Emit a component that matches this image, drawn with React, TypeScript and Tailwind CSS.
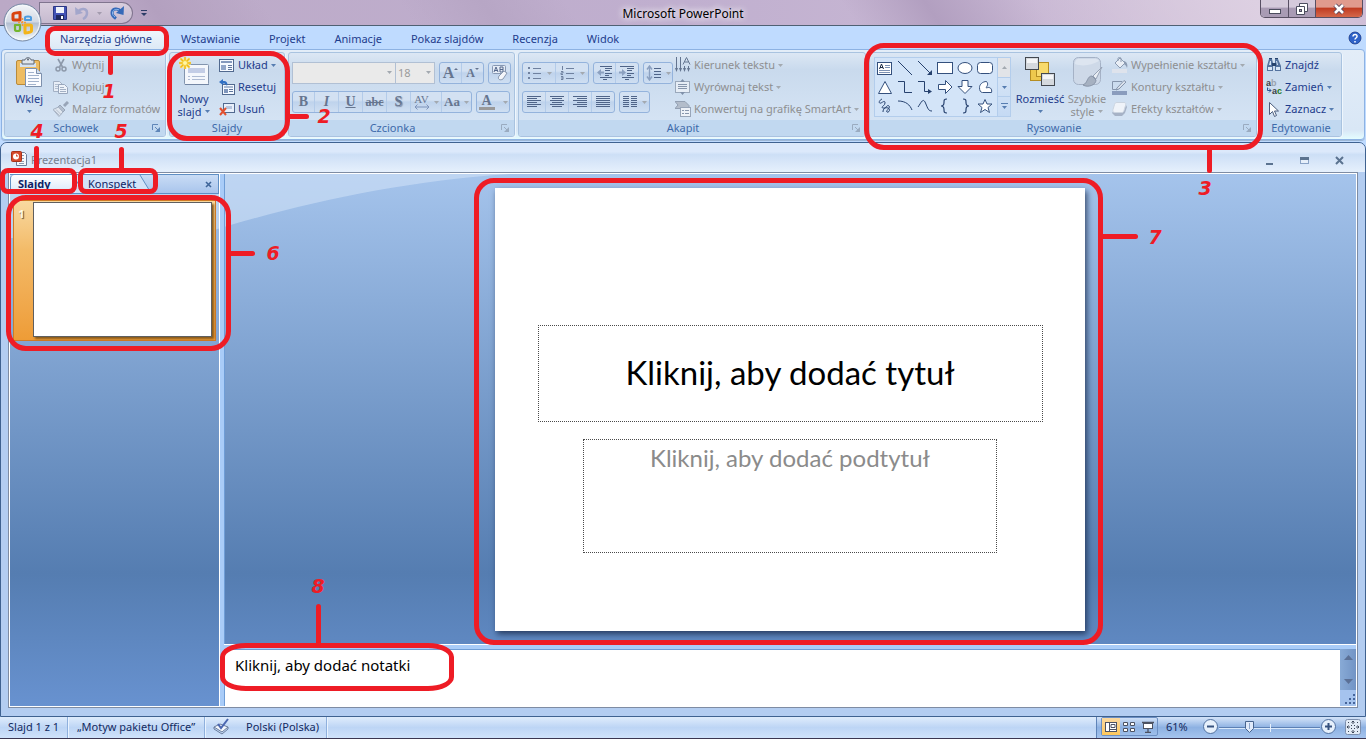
import React from "react";

type IconProps = { children: React.ReactNode; size?: number; className?: string };

function Icon({ children, size = 16, className = "" }: IconProps) {
  return (
    <svg
      width={size}
      height={size}
      viewBox={`0 0 ${size} ${size}`}
      fill="none"
      aria-hidden="true"
      className={"shrink-0 " + className}
    >
      {children}
    </svg>
  );
}

function Arrow({ tone = "text-[#567db1]" }: { tone?: string }) {
  return (
    <svg width="5" height="3" viewBox="0 0 5 3" aria-hidden="true" className={"shrink-0 " + tone}>
      <path d="M0 0h5L2.5 3z" fill="currentColor" />
    </svg>
  );
}

const grey = "text-[#a3a9b0]";

/* ---------- Ribbon building blocks ---------- */

function Group({
  label,
  width,
  launcher = false,
  muted = false,
  children,
}: {
  label: string;
  width: string;
  launcher?: boolean;
  muted?: boolean;
  children: React.ReactNode;
}) {
  return (
    <section
      aria-label={label}
      className={
        "flex h-[85px] shrink-0 flex-col overflow-hidden rounded-[3px] border border-[#a9c3e0] bg-linear-to-b from-[#dce7f4] from-0% via-[#c9daed] via-20% to-[#d8e6f6] shadow-[1px_1px_0_#eef6fd] " +
        width
      }
    >
      <div className="flex flex-1">{children}</div>
      <div
        className={
          "relative flex h-4 items-center justify-center bg-[#c1d8f0] text-[11px] leading-4 text-[#3e6aaa]" +
          (launcher ? " pr-[18px]" : "")
        }
      >
        {label}
        {launcher && (
          <button aria-label={label + " – opcje"} className="absolute right-1 top-1">
            <Icon size={9} className={muted ? "text-[#9aabc0]" : "text-[#5f86b8]"}>
              <path d="M.5 6V.5H6" stroke="currentColor" />
              <path d="M3 3l3 3" stroke="currentColor" />
              <path d="M8 3v5H3z" fill="currentColor" />
            </Icon>
          </button>
        )}
      </div>
    </section>
  );
}

function Row({
  icon,
  text,
  arrow = false,
  disabled = false,
}: {
  icon: React.ReactNode;
  text: string;
  arrow?: boolean;
  disabled?: boolean;
}) {
  return (
    <button
      disabled={disabled}
      className={
        "flex h-[22px] items-center gap-[3px] whitespace-nowrap text-[11px] leading-4" +
        (disabled ? " text-[#8e8f91]" : " text-[#1e3c8c]")
      }
    >
      {icon}
      <span>{text}</span>
      {arrow && <Arrow tone={disabled ? grey : undefined} />}
    </button>
  );
}

function ButtonStrip({ children }: { children: React.ReactNode }) {
  return (
    <div className="flex h-[22px] divide-x divide-[#b3cbe9] rounded-[3px] border border-[#94b3dc] bg-linear-to-b from-[#d3e1f2] from-40% via-[#bfd3ec] via-50% to-[#cfdff2]">
      {children}
    </div>
  );
}

function StripButton({ label, width, children }: { label: string; width: string; children: React.ReactNode }) {
  return (
    <button
      disabled
      aria-label={label}
      className={"flex items-center justify-center gap-1 font-[Liberation_Serif] text-[14px] leading-4 text-[#66758f] " + width}
    >
      {children}
    </button>
  );
}

function Lines({ rows, color = "#4f6488" }: { rows: [number, number][]; color?: string }) {
  return (
    <Icon>
      {rows.map(([x, w], i) => (
        <rect key={i} x={x} y={2 + i * 2} width={w} height="1" fill={color} />
      ))}
    </Icon>
  );
}

/* ---------- Icons ---------- */

const PasteIcon = () => (
  <Icon size={32}>
    <rect x="3.500" y="4.500" width="23" height="24" rx="1.500" fill="#eebc62" stroke="#b98a3a" />
    <rect x="7" y="7" width="16" height="4" fill="#d6e3f2" />
    <path d="M9 4h3c0-3 6-3 6 0h3v4H9z" fill="#dfe5ec" stroke="#5d6777" />
    <circle cx="15" cy="3.500" r="1" fill="#5d6777" />
    <path d="M12.500 12.500h11l5 5v13h-16z" fill="#fbfcff" stroke="#7d90ad" />
    <path d="M23.500 12.500v5h5" fill="#d5e0f0" stroke="#7d90ad" />
    <path d="M15 16.500h6M15 19.500h11M15 22.500h11M15 25.500h11M15 28.500h8" stroke="#a3b3cc" />
  </Icon>
);

const ScissorsIcon = () => (
  <Icon>
    <path d="M5 2l4.500 8M11 2L6.500 10" stroke="#8d99aa" strokeWidth="1.600" />
    <circle cx="5" cy="12" r="2" stroke="#8d99aa" strokeWidth="1.500" />
    <circle cx="11" cy="12" r="2" stroke="#8d99aa" strokeWidth="1.500" />
  </Icon>
);

const CopyIcon = () => (
  <Icon>
    <path d="M.500 2.500h6l3 3v7h-9z" fill="#e8eef7" stroke="#a3b0c4" />
    <path d="M2 5.500h4M2 7.500h4M2 9.500h3" stroke="#b3bfd0" />
    <path d="M5.500 5.500h6l3 3v6h-9z" fill="#eef3fa" stroke="#98a6bc" />
    <path d="M7 8.500h4M7 10.500h6M7 12.500h6" stroke="#a3b0c4" />
  </Icon>
);

const BrushIcon = () => (
  <Icon>
    <path d="M15 1l-4 4" stroke="#98a5b8" strokeWidth="3" />
    <path d="M7 4l5 5-2 2-5-5z" fill="#b3bfcf" stroke="#98a5b8" />
    <path d="M5.500 6L0 8.500l6 7L10 11z" fill="#dfe6ef" stroke="#a3afc0" />
    <path d="M3 8.500l5 5M1.500 9.500l5 5" stroke="#b3bdcc" />
  </Icon>
);

const NewSlideIcon = () => (
  <Icon size={32}>
    <rect x="6.500" y="8.500" width="24" height="20" rx="1" fill="#f4f7fc" stroke="#8294ae" />
    <rect x="10" y="12" width="17" height="5" fill="#c3cde6" />
    <path d="M10 20.500h2M14 20.500h13M10 23.500h2M14 23.500h13" stroke="#aebbd3" />
    <path d="M7 28.500h24" stroke="#7386a4" />
    <path d="M7 1v12M1 7h12M2.500 2.500l9 9M11.500 2.500l-9 9" stroke="#fbe98f" strokeWidth="3" />
    <path d="M7 1v12M1 7h12M2.500 2.500l9 9M11.500 2.500l-9 9" stroke="#f0b916" strokeWidth="1.500" />
    <circle cx="7" cy="7" r="2.500" fill="#fff6a5" stroke="#f4cf3a" />
  </Icon>
);

const LayoutIcon = () => (
  <Icon>
    <rect x=".500" y="2.500" width="14" height="12" fill="#f5f9ff" stroke="#51698f" />
    <rect x="2" y="4" width="11" height="2" fill="#8499bd" />
    <rect x="2" y="8" width="5" height="5" fill="#91a6c9" />
    <path d="M9 8.500h4M9 10.500h4M9 12.500h4" stroke="#5f779e" />
  </Icon>
);

const ResetIcon = () => (
  <Icon>
    <rect x="3.500" y="5.500" width="12" height="10" fill="#f5f9ff" stroke="#51698f" />
    <rect x="5" y="7" width="9" height="2" fill="#a9b9d2" />
    <rect x="5" y="10" width="4" height="4" fill="#7e95bb" />
    <path d="M10 10.500h4M10 12.500h4" stroke="#5f779e" />
    <path d="M0 3l4-3v2c4 0 5 2 4 5C7 5 6 4.500 4 4.500V6z" fill="#2f6fc4" />
  </Icon>
);

const DeleteIcon = () => (
  <Icon>
    <rect x="4.500" y="2.500" width="11" height="9" fill="#e8effa" stroke="#51698f" />
    <rect x="7" y="5" width="6" height="3" fill="#b6c5de" />
    <path d="M1 7l6 7M7 7l-6 7" stroke="#e2502f" strokeWidth="2" />
  </Icon>
);

const TextDirIcon = () => (
  <Icon>
    <path d="M1.500 0v12M5.500 0v12" stroke="#63748f" />
    <path d="M0 11h3l-1.500 4zM4 11h3l-1.500 4zM8 11h3l-1.500 4zM12 11h3l-1.500 4z" fill="#63748f" />
    <path d="M9.500 9v3M13.500 9v3M8 7.500L11.500.500 15 7.500M9.500 5h4" stroke="#63748f" />
  </Icon>
);

const AlignTextIcon = () => (
  <Icon>
    <rect x=".500" y="2.500" width="14" height="11" fill="#e6edf6" stroke="#9aa8bb" />
    <path d="M3 5.500h9M3 7.500h9M3 9.500h9" stroke="#8695ac" />
    <path d="M5 3h5L7.500 0zM5 13h5l-2.500 3z" fill="#7f90aa" />
  </Icon>
);

const SmartArtIcon = () => (
  <Icon>
    <path d="M0 .500h10l4 4v3H0l3-3.500z" fill="#b3bdcb" stroke="#93a0b3" />
    <rect x="5.500" y="6.500" width="10" height="9" fill="#eef2f8" stroke="#98a5b8" />
    <path d="M7 9h2v1H7zM7 12h2v1H7zM10 9h4v1h-4zM10 12h4v1h-4z" fill="#8796ad" />
  </Icon>
);

const BucketIcon = () => (
  <Icon>
    <path d="M3 6l5-5 5 5-5 5z" fill="#e9eef5" stroke="#8c9bb2" />
    <path d="M6 4V1.500C6 0 9 0 9 1.500V5" stroke="#8c9bb2" />
    <path d="M12 4c3 1 4 4 3 7-1-3-2-3-3-4z" fill="#8c9bb2" />
    <rect x="0" y="12" width="15" height="4" fill="#dee3ec" />
  </Icon>
);

const OutlineIcon = () => (
  <Icon>
    <path d="M10 2.500H.500V10.500H6" stroke="#8695ac" />
    <path d="M5 9l7-7.500 2 1.500-7 7-3 1z" fill="#dbe2ec" stroke="#8695ac" />
    <rect x="0" y="12" width="15" height="4" fill="#8a9cbd" />
  </Icon>
);

const EffectsIcon = () => (
  <Icon>
    <path d="M6 4h8l1 2-2 6-3 3H3l-3-3z" fill="#a6b2c6" />
    <path d="M5 1.500h7c2 0 2 1 1.500 3L12 9.500c-.5 2-1.500 2-3 2H3c-2 0-2.500-1-2-3l1.500-5c.5-1.500 1-2 2.500-2z" fill="#eff3f9" stroke="#cbd4e0" />
  </Icon>
);

const ArrangeIcon = () => (
  <Icon size={32}>
    <rect x="6.500" y="13.500" width="12" height="11" fill="#edc84d" stroke="#b58d22" />
    <rect x="12.500" y="6.500" width="12" height="14" fill="#f8da6b" stroke="#b58d22" />
    <rect x="1.500" y="1.500" width="13" height="12" fill="#d5d9de" stroke="#43484f" />
    <path d="M3 3h10v4H3z" fill="#f4f5f7" />
    <rect x="17.500" y="17.500" width="13" height="12" fill="#d5d9de" stroke="#43484f" />
    <path d="M19 19h10v4H19z" fill="#f4f5f7" />
  </Icon>
);

const QuickStylesIcon = () => (
  <Icon size={32}>
    <rect x="2.500" y="1.500" width="27" height="27" rx="5" fill="#ced9e8" stroke="#a5b2c6" />
    <path d="M4 8c8 3 17 1 24-3-1-2-3-2-5-2H8C5 3 4 5 4 8z" fill="#dde5f0" />
    <path d="M31 11l-9 9 3 3z" fill="#e9eef4" stroke="#96a2b5" />
    <path d="M21 20c-5 0-4 7-9 9 5 3 13 0 13-5z" fill="#a6b1c1" stroke="#8894a7" />
  </Icon>
);

const BinocularsIcon = () => (
  <Icon>
    <path d="M3 2h3l1 4v8H1V9zM9 2h3l3 7v5H9z" fill="#54739f" />
    <path d="M6 6h4v3H6zM3 1h3v1H3zM9 1h3v1H9z" fill="#27436d" />
    <path d="M2 10h4v3H2zM10 10h4v3h-4zM4 4h1v4H3zM10 4h1l1 4h-1z" fill="#d9e7f7" />
  </Icon>
);

const ReplaceIcon = () => (
  <svg width="16" height="16" viewBox="0 0 16 16" aria-hidden="true" className="shrink-0 overflow-visible font-[Liberation_Sans] font-bold">
    <text x="0" y="7" fontSize="9" fill="#3b3f48">
      a<tspan fill="#9aa2ad">b</tspan>
    </text>
    <text x="6" y="15" fontSize="9" fill="#3b3f48">
      a<tspan fill="#1d7a1d">c</tspan>
    </text>
    <path d="M1.500 8.500v3H5M3 9.500l2 2-2 2" fill="none" stroke="#2b5596" />
  </svg>
);

const CursorIcon = () => (
  <Icon>
    <path d="M3.500 1.500v12l3-3 2 5 2-1-2-4.500h4z" fill="#fff" stroke="#4b5d7c" />
  </Icon>
);

const shapes: { name: string; d: React.ReactNode }[] = [
  {
    name: "Pole tekstowe",
    d: (
      <>
        <rect x=".500" y="2.500" width="14" height="12" fill="#fff" stroke="#34507d" />
        <path d="M2.500 9l2-5 2 5M3 7.500h3" stroke="#1c2b45" />
        <path d="M8 5.500h5M8 7.500h5M2 10.500h11M2 12.500h11" stroke="#7c91b3" />
      </>
    ),
  },
  { name: "Linia", d: <path d="M1 1l14 14" stroke="#26416e" /> },
  {
    name: "Strzałka",
    d: (
      <>
        <path d="M1 1l12 12" stroke="#26416e" />
        <path d="M15 15v-5l-5 5z" fill="#26416e" />
      </>
    ),
  },
  { name: "Prostokąt", d: <rect x=".500" y="2.500" width="15" height="11" fill="#fff" stroke="#34507d" /> },
  { name: "Elipsa", d: <ellipse cx="8" cy="8" rx="7" ry="5.500" fill="#fff" stroke="#34507d" /> },
  { name: "Prostokąt zaokrąglony", d: <rect x=".500" y="2.500" width="15" height="11" rx="3" fill="#fff" stroke="#34507d" /> },
  { name: "Trójkąt", d: <path d="M8 2.500l6.500 12h-13z" fill="#fff" stroke="#34507d" /> },
  { name: "Łącznik łamany", d: <path d="M1 2.500h6.500v11H15" stroke="#26416e" /> },
  {
    name: "Łącznik łamany ze strzałką",
    d: (
      <>
        <path d="M1 2.500h6.500v10H13" stroke="#26416e" />
        <path d="M11 10v5l4-2.500z" fill="#26416e" />
      </>
    ),
  },
  { name: "Strzałka w prawo", d: <path d="M1.500 5.500h7v-4l6.500 6.500-6.500 6.500v-4h-7z" fill="#fff" stroke="#34507d" /> },
  { name: "Strzałka w dół", d: <path d="M5 1.500h6v6h4l-7 7-7-7h4z" fill="#fff" stroke="#34507d" /> },
  {
    name: "Kształt dowolny",
    d: <path d="M9.500 2.500c-4 0-7 3-7 6s1 5 3 5h9c1-4-2-6-5-4.500-1-1 3-3 0-6.500z" fill="#fff" stroke="#34507d" />,
  },
  { name: "Bazgroły", d: <path d="M5 1C1 3 2 6 4 5s4-3 4 0-5 4-2 5 4-4 6-2-4 5-2 6 4-3 1-4-5 1-5 4" stroke="#26416e" /> },
  { name: "Łuk", d: <path d="M1 3c8 0 12 4 14 9" stroke="#26416e" /> },
  { name: "Krzywa", d: <path d="M1 9C4 5 6-1 8.500 5s3 8 6.500 8" stroke="#26416e" /> },
  { name: "Lewy nawias", d: <path d="M10 1c-3 0-3 1-3 3.500S6 8 4 8c2 0 3 1 3 3.500s0 3.500 3 3.500" stroke="#26416e" strokeWidth="1.200" /> },
  { name: "Prawy nawias", d: <path d="M6 1c3 0 3 1 3 3.500S10 8 12 8c-2 0-3 1-3 3.500S9 15 6 15" stroke="#26416e" strokeWidth="1.200" /> },
  { name: "Gwiazda", d: <path d="M8 1.500l2 4.500h5l-4 3.500 1.500 5L8 11.500l-4.500 3 1.500-5L1 6h5z" fill="#fff" stroke="#34507d" /> },
];

/* ---------- Annotation markers ---------- */

function Callout({ n, box, line, num }: { n: number; box: string; line: string; num: string }) {
  return (
    <>
      <div className={"pointer-events-none absolute z-20 border-[5px] border-[#ee1c25] " + box} />
      <div className={"pointer-events-none absolute z-20 rounded-full bg-[#ee1c25] " + line} />
      <span
        className={
          "pointer-events-none absolute z-20 w-4 text-center font-[DejaVu_Sans] text-[19px] font-bold italic leading-5 text-[#ee1c25] " +
          num
        }
      >
        {n}
      </span>
    </>
  );
}

/* ---------- Window sections ---------- */

function TitleBar() {
  return (
    <header className="relative flex h-[25px] shrink-0 items-start justify-between bg-linear-to-r from-[#bba9c6] via-[#c0afcf] to-[#d3c3da]">
      <div className="pointer-events-none absolute inset-0 bg-[linear-gradient(56deg,transparent_8%,#b3a0bf_12%,transparent_20%,transparent_30%,#b7a6c5_36%,transparent_42%,transparent_62%,#b29fc0_68%,transparent_76%,#ddd0e2_92%,#cdbbd5)]" />
      <div className="relative flex items-center pl-[39px] pt-[2px]">
        <div className="flex h-[22px] w-[94px] items-center gap-2 rounded-r-full rounded-tl-[3px] border border-[#80758f] bg-linear-to-b from-[#d9cede] to-[#c6bacf] pl-[13px]">
          <button aria-label="Zapisz">
            <Icon size={14}>
              <path d="M.500.500h13v13h-13z" fill="#4352b5" stroke="#2c3784" />
              <rect x="3" y="1" width="8" height="6" fill="#eef2fb" />
              <rect x="3" y="9" width="8" height="5" fill="#20285e" />
              <rect x="8" y="10" width="2" height="3" fill="#fff" />
            </Icon>
          </button>
          <button disabled aria-label="Cofnij" className="flex items-center gap-2">
            <Icon size={14}>
              <path d="M3 5.500C6 2 12 2 12 7c0 3-2 5-4 6" stroke="#a3a6cb" strokeWidth="2.500" />
              <path d="M0 1l.5 8L8 7z" fill="#a3a6cb" />
            </Icon>
            <Arrow tone="text-[#a39bae]" />
          </button>
          <button aria-label="Ponów">
            <Icon size={14}>
              <path d="M11 5C8 2 2 2 2 7c0 3 2 4 4 5.500" stroke="#3569b8" strokeWidth="3" />
              <path d="M9 4C6 2.500 2.500 4 2.500 7c0 2 1 3 2.500 4" stroke="#8fbcf0" />
              <path d="M14 0l-.5 9L6 7z" fill="#3569b8" />
            </Icon>
          </button>
        </div>
        <button aria-label="Dostosuj pasek narzędzi" className="ml-2 text-[#2c3c66]">
          <Icon size={6}>
            <path d="M0 .500h6" stroke="currentColor" />
            <path d="M0 3h6L3 6z" fill="currentColor" />
          </Icon>
        </button>
      </div>
      <h1 className="absolute left-1/2 top-1 -translate-x-1/2 text-[12px] leading-5 text-black [text-shadow:0_0_6px_#fff,0_0_8px_#fff]">
        Microsoft PowerPoint
      </h1>
      <div className="relative mr-[3px] flex h-[18px] divide-x divide-[#584f63] overflow-hidden rounded-b-[5px] border border-t-0 border-[#584f63]">
        <button aria-label="Minimalizuj" className="flex w-7 items-center justify-center bg-linear-to-b from-[#d5cadb] from-40% to-[#a99bb4] to-50%">
          <Icon size={12}>
            <rect x=".500" y="6.500" width="11" height="4" fill="#fff" stroke="#4c4d5e" />
          </Icon>
        </button>
        <button aria-label="Przywróć" className="flex w-[27px] items-center justify-center bg-linear-to-b from-[#d5cadb] from-40% to-[#a99bb4] to-50%">
          <Icon size={12}>
            <path d="M3.500.500h8v8h-8z" fill="#fff" stroke="#4c4d5e" />
            <path d="M.500 3.500h8v8h-8z" fill="#fff" stroke="#4c4d5e" />
            <rect x="3.500" y="6.500" width="2" height="2" fill="#a99bb4" stroke="#4c4d5e" />
          </Icon>
        </button>
        <button aria-label="Zamknij" className="flex w-[46px] items-center justify-center bg-linear-to-b from-[#e09a8d] from-40% via-[#c03c22] via-50% to-[#d5674a]">
          <Icon size={12}>
            <path d="M2 2l8 8M10 2l-8 8" stroke="#59455a" strokeWidth="4.500" />
            <path d="M2 2l8 8M10 2l-8 8" stroke="#fff" strokeWidth="2.600" />
          </Icon>
        </button>
      </div>
    </header>
  );
}

function OfficeButton() {
  return (
    <button aria-label="Przycisk pakietu Office" className="absolute left-[3px] top-[3px] z-10">
      <svg width="39" height="39" viewBox="0 0 39 39" aria-hidden="true">
        <defs>
          <linearGradient id="orb" x1="0" y1="0" x2="0" y2="1">
            <stop offset="0" stopColor="#f4f6f9" />
            <stop offset=".48" stopColor="#d2d9e4" />
            <stop offset=".52" stopColor="#b3bfd1" />
            <stop offset="1" stopColor="#f6fbff" />
          </linearGradient>
        </defs>
        <circle cx="19.500" cy="19.500" r="18.500" fill="url(#orb)" stroke="#7688a4" />
        <circle cx="19.500" cy="19.500" r="17" fill="none" stroke="#f5f8fb" />
        <g fill="none" strokeLinejoin="round">
          <path d="M17 17h-6q-1 0-1-1v-5q0-1 7-1.500z" stroke="#d9430f" strokeWidth="3" />
          <path d="M22 17v-2.500q0-1 3-1t3 1V17z" stroke="#4d9ce0" strokeWidth="2" />
          <path d="M17 22v4.500q0 1.500-2.500 1.500T12 26.500V22z" stroke="#74b62d" strokeWidth="2.200" />
          <path d="M22 22h5q1.500 0 1.500 1v5q0 1.500-6.500 2z" stroke="#f3b41b" strokeWidth="3" />
        </g>
        <path d="M19.500 15v9M15 19.500h9" stroke="#f39a3a" strokeWidth="1.500" strokeDasharray="2 1" />
      </svg>
    </button>
  );
}

function TabBar() {
  const tabs = ["Wstawianie", "Projekt", "Animacje", "Pokaz slajdów", "Recenzja", "Widok"];
  return (
    <nav className="flex h-6 shrink-0 items-stretch border-t border-[#4f6073] bg-[#bfdbff] pl-[46px] pr-1 text-[11px] leading-4 text-[#1e3c8c]">
      <button className="mt-[3px] rounded-t-[3px] border border-b-0 border-[#9bbde6] bg-linear-to-b from-[#eef5fd] to-[#dde9f6] px-[13px] pb-[2px] pt-px">
        Narzędzia główne
      </button>
      {tabs.map((t) => (
        <button key={t} className="ml-px whitespace-nowrap px-[14px] pt-[3px]">
          {t}
        </button>
      ))}
      <button aria-label="Pomoc" className="ml-auto flex items-center">
        <Icon size={14}>
          <circle cx="7" cy="7" r="6.500" fill="#2f62c8" stroke="#e6effc" />
          <circle cx="7" cy="7" r="6" stroke="#1b459b" />
          <path d="M5 5.500c0-3 4.500-2.500 4 0C9 7 7 7 7 8.500M7 10v1.500" stroke="#fff" strokeWidth="1.500" />
        </Icon>
      </button>
    </nav>
  );
}

function TwoLineButton({
  icon,
  first,
  second,
  disabled = false,
  width,
}: {
  icon: React.ReactNode;
  first: string;
  second?: string;
  disabled?: boolean;
  width: string;
}) {
  return (
    <button
      disabled={disabled}
      className={
        "flex flex-col items-center whitespace-nowrap pt-[3px] text-[11px] leading-[13px] " +
        width +
        (disabled ? " text-[#8e8f91]" : " text-[#1e3c8c]")
      }
    >
      {icon}
      <span className="mt-1">{first}</span>
      <span className="flex h-[13px] items-center gap-1">
        {second && <span>{second}</span>}
        <Arrow tone={disabled ? grey : undefined} />
      </span>
    </button>
  );
}

function Ribbon() {
  return (
    <div className="mx-[1px] flex h-[91px] shrink-0 gap-[3px] rounded-[4px] border border-[#8db2e3] bg-linear-to-b from-[#e3edf8] from-0% via-[#c9daed] via-20% via-[#d9e7f6] via-90% to-[#e4fdff] px-[2px] pt-[2px] shadow-[0_1px_0_#9db7d6]">
      <Group label="Schowek" width="w-[162px]" launcher>
        <TwoLineButton width="ml-[3px] w-[42px]" icon={<PasteIcon />} first="Wklej" />
        <div className="flex flex-col pl-[3px] pt-px">
          <Row disabled icon={<ScissorsIcon />} text="Wytnij" />
          <Row disabled icon={<CopyIcon />} text="Kopiuj" />
          <Row disabled icon={<BrushIcon />} text="Malarz formatów" />
        </div>
      </Group>

      <Group label="Slajdy" width="w-[116px]">
        <TwoLineButton width="w-[48px]" icon={<NewSlideIcon />} first="Nowy" second="slajd" />
        <div className="flex flex-col pl-px pt-px">
          <Row icon={<LayoutIcon />} text="Układ" arrow />
          <Row icon={<ResetIcon />} text="Resetuj" />
          <Row icon={<DeleteIcon />} text="Usuń" />
        </div>
      </Group>

      <Group label="Czcionka" width="w-[227px]" launcher muted>
        <div className="flex flex-col gap-[7px] pl-[3px] pt-[9px]">
          <div className="flex h-[22px] gap-1">
            <div className="flex">
              <div className="relative">
                <select disabled aria-label="Czcionka" className="block h-[22px] w-[104px] appearance-none border border-[#b1c0d4] bg-[#eaeaea] opacity-100">
                  <option></option>
                </select>
                <span className="pointer-events-none absolute right-1 top-[9px] flex">
                  <Arrow tone={grey} />
                </span>
              </div>
              <div className="relative">
                <select
                  disabled
                  aria-label="Rozmiar czcionki"
                  defaultValue="18"
                  className="block h-[22px] w-[39px] appearance-none border border-l-0 border-[#b1c0d4] bg-[#eaeaea] pl-[2px] text-[11px] leading-4 text-[#9b9b9b] opacity-100"
                >
                  <option>18</option>
                </select>
                <span className="pointer-events-none absolute right-1 top-[9px] flex">
                  <Arrow tone={grey} />
                </span>
              </div>
            </div>
            <ButtonStrip>
              <StripButton label="Zwiększ czcionkę" width="w-[22px] font-bold">
                <span className="text-[16px]">A</span>
                <span className="-ml-1 -mt-2"><Icon size={4}><path d="M0 3l2-2 2 2z" fill="#66758f" /></Icon></span>
              </StripButton>
              <StripButton label="Zmniejsz czcionkę" width="w-[21px] font-bold">
                <span className="text-[12px]">A</span>
                <span className="-ml-1 -mt-2"><Icon size={4}><path d="M0 1l2 2 2-2z" fill="#66758f" /></Icon></span>
              </StripButton>
            </ButtonStrip>
            <ButtonStrip>
              <StripButton label="Wyczyść formatowanie" width="w-[21px]">
                <Icon size={18}>
                  <rect x="1.500" y="1.500" width="13" height="8" rx="1" fill="#e5ecf6" stroke="#8798b3" />
                  <path d="M3 8l2-5 2 5M3.500 6.500h3M9 3v5h3V3zM9 5.500h3" stroke="#53668a" />
                  <path d="M8 12l5-5 3 2-4 6c-3 2-6 0-4-3z" fill="#f4f6fa" stroke="#8998af" />
                </Icon>
              </StripButton>
            </ButtonStrip>
          </div>
          <div className="flex gap-1">
            <ButtonStrip>
              <StripButton label="Pogrubienie" width="w-[22px] font-bold">B</StripButton>
              <StripButton label="Kursywa" width="w-[24px] italic font-bold">I</StripButton>
              <StripButton label="Podkreślenie" width="w-[24px] underline font-bold">U</StripButton>
              <StripButton label="Przekreślenie" width="w-[24px] line-through font-bold">
                <span className="text-[12px]">abc</span>
              </StripButton>
              <StripButton label="Cień" width="w-[24px] font-bold [text-shadow:1px_1px_1px_#7d8ba5]">S</StripButton>
              <StripButton label="Odstępy między znakami" width="w-[31px]">
                <span className="flex flex-col items-center text-[11px] leading-[9px]">
                  AV
                  <svg width="16" height="6" viewBox="0 0 16 6" aria-hidden="true">
                    <path d="M1 3h14M3.500.500L1 3l2.500 2.500M12.500.500L15 3l-2.500 2.500" fill="none" stroke="#7d93bb" />
                  </svg>
                </span>
                <Arrow tone={grey} />
              </StripButton>
              <StripButton label="Zmień wielkość liter" width="w-[29px] font-bold">
                <span className="text-[13px]">Aa</span>
                <Arrow tone={grey} />
              </StripButton>
            </ButtonStrip>
            <ButtonStrip>
              <StripButton label="Kolor czcionki" width="w-[32px] font-bold">
                <span className="w-4 border-b-[3px] border-[#99999a] text-[14px] leading-[13px]">A</span>
                <span className="ml-1"><Arrow tone={grey} /></span>
              </StripButton>
            </ButtonStrip>
          </div>
        </div>
      </Group>

      <Group label="Akapit" width="w-[348px]" launcher muted>
        <div className="flex w-[153px] flex-col gap-[7px] pl-[3px] pt-[9px]">
          <div className="flex gap-1">
            <ButtonStrip>
              <StripButton label="Punktory" width="w-[33px]">
                <Icon>
                  <path d="M1 2h2v2H1zM1 7h2v2H1zM1 12h2v2H1z" fill="#6f819f" />
                  <path d="M6 3.500h8M6 8.500h8M6 13.500h8" stroke="#6f819f" />
                </Icon>
                <Arrow tone={grey} />
              </StripButton>
              <StripButton label="Numerowanie" width="w-[32px]">
                <Icon>
                  <path d="M2.500 1v4M1 6.500h2v1.500H1v1.500h2M1 11.500h2v3H1M1 13h2" stroke="#6f819f" />
                  <path d="M6 3.500h8M6 8.500h8M6 13.500h8" stroke="#6f819f" />
                </Icon>
                <Arrow tone={grey} />
              </StripButton>
            </ButtonStrip>
            <ButtonStrip>
              <StripButton label="Zmniejsz wcięcie" width="w-[22px]">
                <Icon>
                  <path d="M3 1.500h12M8 3.500h7M8 5.500h5M8 8.500h7M8 10.500h4M3 12.500h12M6 14.500h4" stroke="#4f6488" />
                  <path d="M0 7.500l4-3.500v2.500h3v2H4V11z" fill="#8ba0c0" />
                </Icon>
              </StripButton>
              <StripButton label="Zwiększ wcięcie" width="w-[22px]">
                <Icon>
                  <path d="M1 1.500h14M8 3.500h7M8 5.500h5M8 8.500h7M8 10.500h4M3 12.500h12M6 14.500h4" stroke="#4f6488" />
                  <path d="M7 7.500L3 4v2.500H0v2h3V11z" fill="#8ba0c0" />
                </Icon>
              </StripButton>
            </ButtonStrip>
            <ButtonStrip>
              <StripButton label="Odstępy między wierszami" width="w-[28px]">
                <Icon>
                  <path d="M3.500 2v12M1 4.500L3.500 1 6 4.500M1 11.500L3.500 15 6 11.500" stroke="#8ba0c0" strokeWidth="1.400" />
                  <path d="M8 3.500h7M8 6.500h7M8 9.500h7M8 12.500h7" stroke="#4f6488" />
                </Icon>
                <Arrow tone={grey} />
              </StripButton>
            </ButtonStrip>
          </div>
          <div className="flex gap-1">
            <ButtonStrip>
              <StripButton label="Do lewej" width="w-[23px]"><Lines rows={[[1, 14], [1, 10], [1, 14], [1, 10], [1, 14], [1, 10]]} /></StripButton>
              <StripButton label="Do środka" width="w-[23px]"><Lines rows={[[1, 14], [3, 10], [1, 14], [3, 10], [1, 14], [3, 10]]} /></StripButton>
              <StripButton label="Do prawej" width="w-[23px]"><Lines rows={[[1, 14], [5, 10], [1, 14], [5, 10], [1, 14], [5, 10]]} /></StripButton>
              <StripButton label="Wyjustuj" width="w-[22px]"><Lines rows={[[1, 14], [1, 14], [1, 14], [1, 14], [1, 14], [1, 14]]} /></StripButton>
            </ButtonStrip>
            <ButtonStrip>
              <StripButton label="Kolumny" width="w-[29px]">
                <Icon>
                  <path d="M1 2.500h6M9 2.500h6M1 4.500h6M9 4.500h6M1 6.500h6M9 6.500h6M1 8.500h6M9 8.500h6M1 10.500h6M9 10.500h6M1 12.500h6M9 12.500h6" stroke="#4f6488" />
                </Icon>
                <Arrow tone={grey} />
              </StripButton>
            </ButtonStrip>
          </div>
        </div>
        <div className="flex flex-col pl-[3px] pt-px">
          <Row disabled icon={<TextDirIcon />} text="Kierunek tekstu" arrow />
          <Row disabled icon={<AlignTextIcon />} text="Wyrównaj tekst" arrow />
          <Row disabled icon={<SmartArtIcon />} text="Konwertuj na grafikę SmartArt" arrow />
        </div>
      </Group>

      <Group label="Rysowanie" width="w-[388px]" launcher muted>
        <div className="ml-[4px] mt-[4px] flex h-[60px] border border-[#b3cdec] bg-[#d3e4f8]">
          <div className="grid w-[122px] grid-cols-6 grid-rows-3 place-items-center pr-[2px]">
            {shapes.map((s) => (
              <button key={s.name} aria-label={s.name} className="flex">
                <Icon>{s.d}</Icon>
              </button>
            ))}
          </div>
          <div className="flex w-[13px] flex-col divide-y divide-[#b3cdec] border-l border-[#b3cdec] bg-linear-to-b from-[#dde9f7] to-[#c5daf4]">
            <button disabled aria-label="W górę" className="flex flex-1 items-center justify-center bg-[#e2e4e8]">
              <Icon size={5}><path d="M0 4h5L2.500 1z" fill="#a3a9b0" /></Icon>
            </button>
            <button aria-label="W dół" className="flex flex-1 items-center justify-center"><Arrow /></button>
            <button aria-label="Więcej" className="flex flex-1 items-center justify-center">
              <Icon size={7}><path d="M0 .500h7" stroke="#567db1" /><path d="M1 3h5L3.500 6z" fill="#567db1" /></Icon>
            </button>
          </div>
        </div>
        <TwoLineButton width="ml-1 w-[50px]" icon={<ArrangeIcon />} first="Rozmieść" />
        <TwoLineButton width="ml-px w-[42px]" disabled icon={<QuickStylesIcon />} first="Szybkie" second="style" />
        <div className="flex flex-col pl-[4px] pt-px">
          <Row disabled icon={<BucketIcon />} text="Wypełnienie kształtu" arrow />
          <Row disabled icon={<OutlineIcon />} text="Kontury kształtu" arrow />
          <Row disabled icon={<EffectsIcon />} text="Efekty kształtów" arrow />
        </div>
      </Group>

      <Group label="Edytowanie" width="w-[82px]">
        <div className="flex flex-col pl-[5px] pt-px">
          <Row icon={<BinocularsIcon />} text="Znajdź" />
          <Row icon={<ReplaceIcon />} text="Zamień" arrow />
          <Row icon={<CursorIcon />} text="Zaznacz" arrow />
        </div>
      </Group>
    </div>
  );
}

function DocumentBar() {
  return (
    <div className="flex h-[29px] shrink-0 items-center rounded-t-[6px] bg-linear-to-b from-[#dce9fb] from-30% via-[#cddff6] via-40% to-[#e6f0fc] pl-[10px] pr-5 text-[11px] leading-4 text-[#75808f]">
      <Icon size={16} className="mt-[3px]">
        <path d="M5.500 1.500h8l2 2v11h-10z" fill="#f6f8fc" stroke="#6c7d99" />
        <path d="M8 4.500h5M8 7.500h5M8 10.500h5M8 12.500h5" stroke="#8a9ab3" />
        <rect x=".500" y=".500" width="10" height="10" rx="1" fill="#d6492a" stroke="#a8331a" />
        <circle cx="5" cy="5.500" r="3" fill="#fff" />
        <path d="M5 5.500V3l2.500 2.500z" fill="#d6492a" />
      </Icon>
      <span className="ml-1 pt-[5px]">Prezentacja1</span>
      <div className="ml-auto flex items-center gap-[24px] pt-[5px] text-[#5b7390]">
        <button aria-label="Minimalizuj dokument">
          <Icon size={11}><rect x="2" y="8" width="7" height="2" fill="currentColor" /></Icon>
        </button>
        <button aria-label="Maksymalizuj dokument">
          <Icon size={11}>
            <rect x="1.500" y="2.500" width="8" height="6" fill="#e6effa" stroke="#8aa3c6" />
            <rect x="1" y="2" width="9" height="3" fill="currentColor" />
          </Icon>
        </button>
        <button aria-label="Zamknij dokument">
          <Icon size={11}><path d="M2 2l7 7M9 2l-7 7" stroke="currentColor" strokeWidth="2" /></Icon>
        </button>
      </div>
    </div>
  );
}

function SidePane() {
  return (
    <aside className="flex w-[209px] shrink-0 flex-col">
      <div className="flex h-5 items-stretch border border-l-0 border-[#5f8fc4] bg-linear-to-b from-[#c9dcf5] to-[#a9c5ec] text-[11px] leading-4 text-[#0e1f66]">
        <button className="w-[66px] rounded-tl-[4px] border-l border-[#5f8fc4] bg-linear-to-b from-white to-[#d8e7fa] pl-[7px] text-left font-bold">
          Slajdy
        </button>
        <button className="relative w-[76px] pl-3 text-left">
          <svg width="76" height="18" viewBox="0 0 76 18" aria-hidden="true" className="absolute left-0 top-0">
            <path d="M0 0h64l11 18H0z" fill="#d3e3f8" />
            <path d="M64 0l11 18M0 5l4 7" fill="none" stroke="#5f8fc4" />
          </svg>
          <span className="relative">Konspekt</span>
        </button>
        <button aria-label="Zamknij okienko" className="ml-auto mr-[6px]">
          <Icon size={7}><path d="M1 1l5 5M6 1L1 6" stroke="#3f6599" strokeWidth="1.600" /></Icon>
        </button>
      </div>
      <button
        aria-label="Slajd 1"
        className="mx-[3px] mt-[6px] flex h-[141px] items-start border border-[#d27a24] bg-linear-to-b from-[#f8d9a0] from-0% via-[#f3bb68] via-35% to-[#ee9c36] py-px pr-[3px]"
      >
        <span className="w-[19px] pr-1 pt-1 text-center text-[11px] font-bold leading-4 text-[#fffbe6] [text-shadow:1px_1px_1px_#5b4a30]">1</span>
        <span className="h-[135px] flex-1 border border-[#5f5f5f] bg-white shadow-[2px_2px_2px_#8a5a1a]" />
      </button>
    </aside>
  );
}

function SlideArea() {
  return (
    <main className="relative flex flex-1 items-start justify-center border-l border-[#6f9dd6] pr-px pt-[14px]">
      <article className="relative flex aspect-[590/443] w-[590px] flex-col items-center bg-white pt-[137px] shadow-[2px_3px_6px_rgba(20,35,65,0.75)]">
        <div className="flex h-[97px] w-[505px] items-center justify-center border border-dotted border-[#4a4a4a] pb-1 font-[Lato] text-[33px] leading-10 text-black">
          <h2>Kliknij, aby dodać tytuł</h2>
        </div>
        <div className="mt-[17px] flex h-[114px] w-[414px] items-start justify-center border border-dotted border-[#4a4a4a] pt-[2px] font-[Lato] text-[24px] leading-8 text-[#8b8b8b]">
          <p>Kliknij, aby dodać podtytuł</p>
        </div>
        <Callout
          n={7}
          box="-left-[21px] -right-[18px] -top-[10px] -bottom-[14px] rounded-[20px]"
          line="left-[605px] top-[46px] h-[5px] w-[38px]"
          num="left-[652px] top-[39px]"
        />
      </article>
    </main>
  );
}

function Notes() {
  return (
    <div className="relative flex h-[62px] shrink-0 border-t border-white">
      <div className="flex flex-1 border-t-[4px] border-[#a9ccf8]">
        <textarea
          aria-label="Notatki"
          defaultValue="Kliknij, aby dodać notatki"
          className="flex-1 resize-none border-l border-t border-[#6f9dd6] bg-white pl-[10px] pt-[3px] text-[15px] leading-6 text-black outline-none"
        />
        <div className="flex w-4 flex-col bg-[#a5c3ee]">
          <div className="flex h-[41px] flex-col items-center justify-between bg-linear-to-r from-[#88aad6] to-[#7294c5] py-[6px] text-[#5b7096]">
            <button aria-label="Przewiń w górę" className="flex">
              <svg width="9" height="5" viewBox="0 0 9 5" aria-hidden="true"><path d="M0 5h9L4.500 0z" fill="currentColor" /></svg>
            </button>
            <button aria-label="Przewiń w dół" className="flex">
              <svg width="9" height="5" viewBox="0 0 9 5" aria-hidden="true"><path d="M0 0h9L4.500 5z" fill="currentColor" /></svg>
            </button>
          </div>
          <Icon size={16}>
            <path d="M13 4h2v2h-2zM9 8h2v2H9zM13 8h2v2h-2zM5 12h2v2H5zM9 12h2v2H9zM13 12h2v2h-2z" fill="#46659b" />
          </Icon>
        </div>
      </div>
      <Callout
        n={8}
        box="-left-[4px] -top-[2px] h-[48px] w-[234px] rounded-[26px/14px]"
        line="left-[92px] -top-[41px] h-[42px] w-[5px]"
        num="left-[86px] -top-[69px]"
      />
    </div>
  );
}

function StatusBar() {
  const cell = "flex items-center whitespace-nowrap border-r border-[#8fb0dd] pb-[2px] shadow-[1px_0_0_#e9f3ff]";
  return (
    <footer className="flex h-[22px] shrink-0 items-stretch border-b border-[#3a3550] bg-linear-to-b from-[#dceafb] from-5% via-[#bdd5f5] via-50% to-[#cfe2fa] text-[11px] leading-4 text-[#12295f]">
      <div className={cell + " w-[68px] pl-2"}>Slajd 1 z 1</div>
      <div className={cell + " w-[137px] pl-[9px]"}>„Motyw pakietu Office”</div>
      <div className={cell + " w-[122px] gap-4 pl-2"}>
        <Icon size={17}>
          <path d="M1 9l6-3 8 3-6 5z" fill="#f2f6fc" stroke="#6a7c9c" />
          <path d="M1 9v2l8 5 6-5V9" stroke="#6a7c9c" />
          <path d="M5 6l3 4 7-9" stroke="#4b66b0" strokeWidth="2" />
        </Icon>
        Polski (Polska)
      </div>
      <div className="ml-auto flex items-center border-l border-[#5e83b8] bg-linear-to-b from-[#cfe0f7] from-5% via-[#8db1e2] via-50% to-[#a5c4ee] pb-[2px] pl-1 pr-[5px]">
        <div className="flex h-[19px] rounded-[2px] border border-[#6c8fc3]">
          <button aria-label="Normalny" className="flex w-[18px] items-center justify-center bg-linear-to-b from-[#fbd9a0] to-[#fdc75a]">
            <Icon size={12}>
              <rect x=".500" y="1.500" width="11" height="9" fill="#fff" stroke="#4c5262" />
              <path d="M4.500 2v8M6 3.500h4v3H6zM5 8.500h6" stroke="#4c5262" />
            </Icon>
          </button>
          <button aria-label="Sortowanie slajdów" className="flex w-[18px] items-center justify-center">
            <Icon size={12}>
              <path d="M.500 1.500h4v3h-4zM7.500 1.500h4v3h-4zM.500 7.500h4v3h-4zM7.500 7.500h4v3h-4z" fill="#fff" stroke="#4c5262" />
            </Icon>
          </button>
          <button aria-label="Pokaz slajdów" className="flex w-[19px] items-center justify-center">
            <Icon size={12}>
              <path d="M0 1.500h12M6 8v3M3 11.500h6" stroke="#4c5262" strokeWidth="1.300" />
              <rect x="1.500" y="2.500" width="9" height="5" fill="#fff" stroke="#4c5262" />
            </Icon>
          </button>
        </div>
        <button className="ml-2 w-6 text-left">61%</button>
        <button aria-label="Pomniejsz" className="ml-3">
          <Icon size={17}>
            <circle cx="8.500" cy="8.500" r="7" fill="#e6f0fc" stroke="#50709f" />
            <path d="M5 8.500h7" stroke="#37527f" strokeWidth="2" />
          </Icon>
        </button>
        <div className="relative h-4 w-[101px]">
          <svg width="101" height="16" viewBox="0 0 101 16" fill="none" aria-hidden="true">
            <path d="M0 8.500h101" stroke="#5c80b4" />
            <path d="M0 9.500h101" stroke="#d8e8fb" />
            <path d="M51.500 5v8" stroke="#e6f0fc" />
            <path d="M26.500 2.500h8v7l-4 4-4-4z" fill="#e0eafa" stroke="#47648f" />
            <path d="M30.500 4v6" stroke="#8ba6cd" />
          </svg>
          <input type="range" aria-label="Powiększenie" min="10" max="400" defaultValue="61" className="absolute inset-0 w-full opacity-0" />
        </div>
        <button aria-label="Powiększ">
          <Icon size={17}>
            <circle cx="8.500" cy="8.500" r="7" fill="#e6f0fc" stroke="#50709f" />
            <path d="M5 8.500h7M8.500 5v7" stroke="#37527f" strokeWidth="2" />
          </Icon>
        </button>
        <button aria-label="Dopasuj slajd do okna" className="ml-2">
          <Icon size={16}>
            <rect x=".500" y=".500" width="15" height="15" rx="2" fill="#e3ecf7" stroke="#7c8fae" />
            <path d="M8 2v3M8 11v3M2 8h3M11 8h3" stroke="#3c4658" />
            <path d="M6.500 3.500L8 2l1.500 1.500M6.500 12.500L8 14l1.500-1.500M3.500 6.500L2 8l1.500 1.500M12.500 6.500L14 8l-1.500 1.500" stroke="#3c4658" />
            <path d="M3 3h1v1H3zM12 3h1v1h-1zM3 12h1v1H3zM12 12h1v1h-1zM6 6h1v1H6zM9 6h1v1H9zM6 9h1v1H6zM9 9h1v1H9z" fill="#3c4658" />
          </Icon>
        </button>
      </div>
    </footer>
  );
}

export default function App() {
  return (
    <div className="relative flex min-h-screen flex-col overflow-hidden bg-[#bfdbff] font-['Noto_Sans',sans-serif]">
      <TitleBar />
      <OfficeButton />
      <TabBar />
      <Ribbon />
      <div className="mt-[2px] flex flex-1 flex-col rounded-t-[7px] border border-[#3f6290] bg-[#b3cdf1]">
        <DocumentBar />
        <div className="relative mx-[7px] mb-[8px] flex flex-1 border border-[#7e8ca3] bg-linear-to-b from-[#a5c4ec] from-0% via-[#557db1] via-75% to-[#6892d0] p-px shadow-[inset_0_0_0_1px_#fff]">
          <svg width="500" height="64" viewBox="0 0 500 64" aria-hidden="true" className="absolute left-px top-px">
            <path d="M0 0h500C380 8 270 34 180 64H0z" fill="#d4e4f8" fillOpacity=".55" />
          </svg>
          <div className="relative flex flex-1">
            <SidePane />
            <div className="w-[5px] shrink-0 border-l border-white bg-[#a9ccf8]" />
            <div className="flex flex-1 flex-col">
              <SlideArea />
              <Notes />
            </div>
          </div>
        </div>
      </div>
      <StatusBar />

      <Callout n={1} box="left-[45px] top-[26px] h-[30px] w-[124px] rounded-[10px]" line="left-[108px] top-[53px] h-[22px] w-[5px]" num="left-[101px] top-[81px]" />
      <Callout n={2} box="left-[167px] top-[51px] h-[90px] w-[123px] rounded-[20px]" line="left-[287px] top-[114px] h-[5px] w-[22px]" num="left-[316px] top-[106px]" />
      <Callout n={3} box="left-[864px] top-[43px] h-[107px] w-[399px] rounded-[20px]" line="left-[1207px] top-[147px] h-[26px] w-[5px]" num="left-[1197px] top-[178px]" />
      <Callout n={4} box="left-0 top-[168px] h-[26px] w-[77px] rounded-[8px]" line="left-[34px] top-[146px] h-[25px] w-[5px]" num="left-[29px] top-[121px]" />
      <Callout n={5} box="left-[78px] top-[168px] h-[26px] w-[80px] rounded-[8px]" line="left-[119px] top-[147px] h-[24px] w-[5px]" num="left-[113px] top-[121px]" />
      <Callout n={6} box="left-[6px] top-[195px] h-[156px] w-[225px] rounded-[20px]" line="left-[228px] top-[251px] h-[5px] w-[27px]" num="left-[265px] top-[243px]" />
    </div>
  );
}
